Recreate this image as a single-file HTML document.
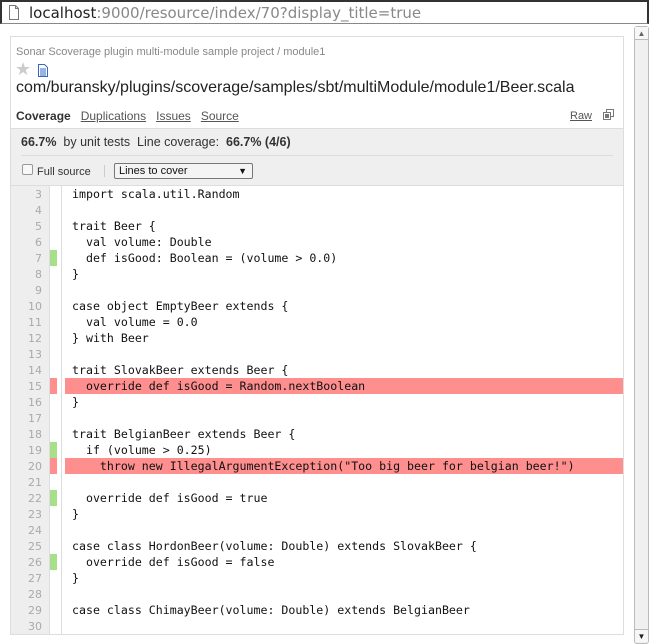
<!DOCTYPE html>
<html><head><meta charset="utf-8"><style>
*{margin:0;padding:0;box-sizing:border-box}
body{width:649px;height:644px;overflow:hidden;background:#fff;font-family:"Liberation Sans",sans-serif;position:relative}
.abs{position:absolute}
#addr{left:0;top:0;width:649px;height:24px;border:2px solid #333;border-bottom:1px solid #888;background:#fff;font-family:"DejaVu Sans",sans-serif;font-size:15px;line-height:22px;padding-left:27px;color:#888}
#addr b{font-weight:normal;color:#222}
#scroll{left:634px;top:26px;width:15px;height:618px;background:#f0f0f0;border:1px solid #bbb;border-radius:3px}
#panel{left:10px;top:36px;width:614px;height:599px;border:1px solid #ddd}
.ln{position:absolute;left:11px;width:38px;height:16px;text-align:right;padding-right:7px;font-family:"DejaVu Sans",sans-serif;font-size:11px;color:#aaa;line-height:17px}
.cv{position:absolute;left:50px;width:7px;height:16px}
.code{position:absolute;left:65px;width:558px;height:16px;font-family:"DejaVu Sans Mono",monospace;font-size:11.6px;line-height:17px;padding-left:7px;white-space:pre;color:#111}
.red{background:#ff8e8e}
a{color:#555;text-decoration:underline}
</style></head><body>
<div class="abs" id="addr"><b>localhost</b>:9000/resource/index/70?display_title=true</div>
<svg class="abs" style="left:8px;top:5px" width="12" height="15"><path d="M1.5 .5h6l3 3v11h-9z M7.5 .5v3h3" fill="#fff" stroke="#777"/></svg>
<div class="abs" id="scroll"></div>
<div class="abs" style="left:635px;top:27px;width:13px;height:13px;text-align:center;font-size:8px;color:#666;line-height:13px;border-bottom:1px solid #bbb;background:#f7f7f7">▲</div>
<div class="abs" style="left:635px;top:629px;width:13px;height:13px;text-align:center;font-size:8px;color:#222;line-height:13px;border-top:1px solid #bbb;background:#f7f7f7">▼</div>
<div class="abs" id="panel"></div>
<div class="abs" style="left:16px;top:46px;font-size:11px;color:#888">Sonar Scoverage plugin multi-module sample project / module1</div>
<div class="abs" style="left:15px;top:59px;font-size:18px;color:#ccc">★</div>
<svg class="abs" style="left:38px;top:64px" width="10" height="13"><path d="M.5 .5h6l3 3v9h-9z M2 5h6 M2 7h6 M2 9h6 M2 11h6" fill="#fff" stroke="#3367c8"/></svg>
<div class="abs" style="left:16px;top:79px;font-size:16px;color:#222">com/buransky/plugins/scoverage/samples/sbt/multiModule/module1/Beer.scala</div>
<div class="abs" style="left:16px;top:109px;font-size:12px;color:#333"><b>Coverage</b>&nbsp;&nbsp;&nbsp;<a>Duplications</a>&nbsp;&nbsp;&nbsp;<a>Issues</a>&nbsp;&nbsp;&nbsp;<a>Source</a></div>
<div class="abs" style="left:570px;top:110px;font-size:11px"><a>Raw</a></div>
<svg class="abs" style="left:603px;top:109px" width="11" height="11"><rect x="3.5" y=".5" width="7" height="7" fill="#fff" stroke="#777"/><rect x=".5" y="3.5" width="7" height="7" fill="#fff" stroke="#777"/><rect x="2" y="5" width="4" height="4" fill="#777"/></svg>
<div class="abs" style="left:11px;top:128px;width:612px;height:58px;background:#efefef;border-top:1px solid #ddd;border-bottom:1px solid #ddd"></div>
<div class="abs" style="left:21px;top:135px;font-size:12.5px;color:#333"><b>66.7%</b>&nbsp; by unit tests&nbsp; Line coverage:&nbsp; <b>66.7% (4/6)</b></div>
<div class="abs" style="left:21px;top:155px;width:592px;height:1px;background:#ddd"></div>
<div class="abs" style="left:22px;top:164px;width:11px;height:11px;border:1px solid #999;border-radius:2px;background:#f8f8f8"></div>
<div class="abs" style="left:37px;top:166px;font-size:11px;color:#333">Full source</div>
<div class="abs" style="left:104px;top:165px;width:1px;height:12px;background:#ccc"></div>
<div class="abs" style="left:114px;top:163px;width:139px;height:16px;border:1px solid #777;border-radius:2px;background:#f4f4f4;font-size:11px;line-height:14px;padding-left:4px;color:#111">Lines to cover<span style="position:absolute;right:5px;font-size:9px">▼</span></div>
<div class="abs" style="left:11px;top:186px;width:39px;height:448px;background:#eee;border-right:1px solid #ddd"></div>
<div class="abs" style="left:61px;top:186px;width:1px;height:448px;background:#ddd"></div>
<div id="lines"></div>
<script>
var L=[["import scala.util.Random"],[""],["trait Beer {"],["  val volume: Double"],["  def isGood: Boolean = (volume > 0.0)","g"],["}"],[""],["case object EmptyBeer extends {"],["  val volume = 0.0"],["} with Beer"],[""],["trait SlovakBeer extends Beer {"],["  override def isGood = Random.nextBoolean","r"],["}"],[""],["trait BelgianBeer extends Beer {"],["  if (volume > 0.25)","g"],["    throw new IllegalArgumentException(\"Too big beer for belgian beer!\")","r"],[""],["  override def isGood = true","g"],["}"],[""],["case class HordonBeer(volume: Double) extends SlovakBeer {"],["  override def isGood = false","g"],["}"],[""],["case class ChimayBeer(volume: Double) extends BelgianBeer"],[""]];
var h="";L.forEach(function(l,i){var y=186+i*16;h+='<div class="ln" style="top:'+y+'px">'+(i+3)+'</div>';
if(l[1])h+='<div class="cv" style="top:'+y+'px;background:'+(l[1]=="g"?"#a8e08a":"#ff8e8e")+'"></div>';
h+='<div class="code'+(l[1]=="r"?" red":"")+'" style="top:'+y+'px">'+l[0].replace(/</g,"&lt;")+'</div>';});
document.getElementById("lines").innerHTML=h;
</script>
</body></html>
